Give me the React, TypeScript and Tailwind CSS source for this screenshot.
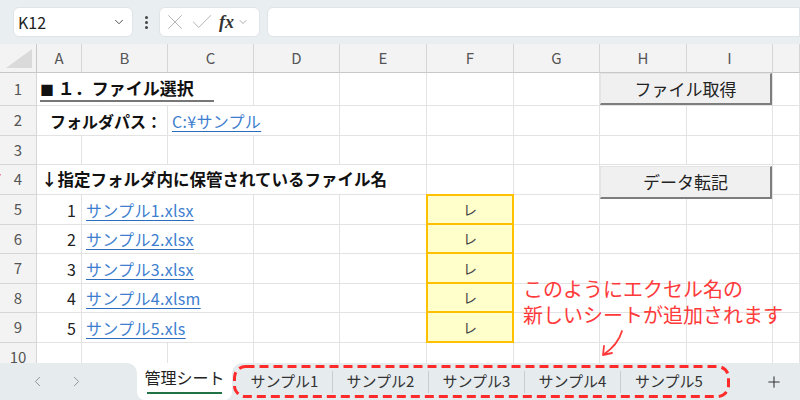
import { ChevronDown, ChevronLeft, ChevronRight, Plus, X, Check } from "lucide-react";

const GRID =
  "grid grid-cols-[37px_45px_86px_86px_86px_87px_87px_86px_87px_86px_1fr]";
const CELL = "border-r border-b border-[#e3e3e3]";
const HEAD =
  "flex items-center justify-center bg-[#f3f3f3] border-r border-b border-[#d6d6d6] text-[15px] text-[#555]";
const LINK =
  "text-[16px] tracking-[0.3px] text-[#3d7ecf] underline decoration-[#2c6cbd] underline-offset-[3px]";

const letters = ["A", "B", "C", "D", "E", "F", "G", "H", "I", ""];

function RowHead({ n }: { n: number }) {
  return <div className={HEAD}>{n}</div>;
}

function SheetButton({ label }: { label: string }) {
  return (
    <div className="flex h-full w-full items-center justify-center border-t border-l border-[#e4e4e4] border-r-2 border-b-2 border-r-[#7d7d7d] border-b-[#7d7d7d] bg-[#f0f0f0] text-[17px] text-[#222]">
      {label}
    </div>
  );
}

function FileRow({ n, name, first }: { n: number; name: string; first?: boolean }) {
  return (
    <div className={`${GRID} ${n === 5 ? "h-[30px]" : n % 2 === 0 ? "h-[29px]" : "h-[30px]"}`}>
      <RowHead n={n + 4} />
      <div className={`${CELL} flex items-center justify-end pr-[5px] text-[16px] text-[#222]`}>{n}</div>
      <div className={`${CELL} col-span-2 flex items-center pl-[4px] whitespace-nowrap`}>
        <span className={LINK}>{name}</span>
      </div>
      <div className={CELL} />
      <div className={CELL} />
      <div
        className={`z-10 -ml-px flex items-center justify-center border-x-2 border-b-2 border-[#ffc000] bg-[#ffffcc] text-[14px] text-[#444] ${
          first ? "-mt-px border-t-2" : ""
        }`}
      >
        レ
      </div>
      <div className={CELL} />
      <div className={CELL} />
      <div className={CELL} />
      <div className={CELL} />
    </div>
  );
}

const files = ["サンプル1.xlsx", "サンプル2.xlsx", "サンプル3.xlsx", "サンプル4.xlsm", "サンプル5.xls"];
const sheets = ["サンプル1", "サンプル2", "サンプル3", "サンプル4", "サンプル5"];

export default function App() {
  return (
    <div className="relative h-[400px] w-[800px] overflow-hidden bg-white font-['Noto_Sans_CJK_JP',sans-serif]">
      {/* formula bar */}
      <div className="flex h-[44px] items-center bg-[#e9eef1] pl-[13px]">
        <div className="flex h-[30px] w-[120px] items-center justify-between rounded-[6px] border border-[#dfe4e8] bg-white pl-[4px] pr-[6px]">
          <span className="text-[16px] text-[#222]">K12</span>
          <ChevronDown size={14} strokeWidth={1.6} className="text-[#444]" />
        </div>
        <div className="flex w-[26px] flex-col items-center gap-[2px]">
          <span className="h-[3px] w-[3px] rounded-full bg-[#444]" />
          <span className="h-[3px] w-[3px] rounded-full bg-[#444]" />
          <span className="h-[3px] w-[3px] rounded-full bg-[#444]" />
        </div>
        <div className="flex h-[30px] w-[101px] items-center rounded-[6px] border border-[#dfe4e8] bg-white pl-[2px]">
          <X size={26} strokeWidth={0.9} className="text-[#b4b4b4]" />
          <Check size={26} strokeWidth={0.9} className="ml-[1px] text-[#b4b4b4]" />
          <span className="ml-[4px] font-['Liberation_Serif',serif] text-[18px] font-bold italic text-[#333]">fx</span>
          <ChevronDown size={12} strokeWidth={1.4} className="ml-[3px] text-[#888]" />
        </div>
        <div className="ml-[7px] h-[30px] flex-1 rounded-l-[6px] border border-[#dfe4e8] bg-white" />
      </div>

      {/* grid */}
      <div className="h-[319px] overflow-hidden">
        <div className={`${GRID} h-[29px]`}>
          <div className="flex items-end justify-end border-r border-b border-[#c8c8c8] bg-[#f3f3f3] pb-[4px] pr-[4px]">
            <svg width="26" height="19" viewBox="0 0 26 19">
              <polygon points="26,0 26,19 0,19" fill="#dadada" />
            </svg>
          </div>
          {letters.map((l, i) => (
            <div key={i} className={`${HEAD} border-b-[#c8c8c8]`}>
              {l}
            </div>
          ))}
        </div>

        {/* row 1 */}
        <div className={`${GRID} h-[33px]`}>
          <RowHead n={1} />
          <div className={`${CELL} col-span-3 flex items-center whitespace-nowrap pl-[3px]`}>
            <span className="border-b-2 border-[#777] pr-[20px] text-[17px] font-bold leading-[22px] text-[#111]">
              <span className="text-[14px]">■</span> １．ファイル選択
            </span>
          </div>
          <div className={CELL} />
          <div className={CELL} />
          <div className={CELL} />
          <div className={CELL} />
          <div className={`${CELL} col-span-2`}>
            <SheetButton label="ファイル取得" />
          </div>
          <div className={CELL} />
        </div>

        {/* row 2 */}
        <div className={`${GRID} h-[30px]`}>
          <RowHead n={2} />
          <div className={`${CELL} col-span-2 flex items-center whitespace-nowrap pl-[13px] text-[16px] font-bold text-[#111]`}>
            フォルダパス：
          </div>
          <div className={`${CELL} col-span-2 flex items-center whitespace-nowrap pl-[4px]`}>
            <span className={LINK}>C:¥サンプル</span>
          </div>
          <div className={CELL} />
          <div className={CELL} />
          <div className={CELL} />
          <div className={CELL} />
          <div className={CELL} />
          <div className={CELL} />
        </div>

        {/* row 3 */}
        <div className={`${GRID} h-[29px]`}>
          <RowHead n={3} />
          {letters.map((_, i) => (
            <div key={i} className={CELL} />
          ))}
        </div>

        {/* row 4 */}
        <div className={`${GRID} h-[30px]`}>
          <RowHead n={4} />
          <div className={`${CELL} col-span-5 flex items-center whitespace-nowrap pl-[4px] text-[16.5px] font-bold text-[#111]`}>
            ↓指定フォルダ内に保管されているファイル名
          </div>
          <div className={CELL} />
          <div className={CELL} />
          <div className={`${CELL} relative col-span-2`}>
            <div className="absolute left-0 right-0 top-px z-20 h-[33px]">
              <SheetButton label="データ転記" />
            </div>
          </div>
          <div className={CELL} />
        </div>

        {files.map((f, i) => (
          <FileRow key={f} n={i + 1} name={f} first={i === 0} />
        ))}

        {/* row 10 */}
        <div className={`${GRID} h-[30px]`}>
          <RowHead n={10} />
          {letters.map((_, i) => (
            <div key={i} className={CELL} />
          ))}
        </div>
      </div>

      {/* sheet tabs */}
      <div className="relative flex h-[37px] bg-white">
        <div className="flex w-[137px] items-center rounded-tr-[10px] bg-[#e6ebee] pl-[29px]">
          <ChevronLeft size={17} strokeWidth={1.4} className="text-[#8c9296]" />
          <ChevronRight size={17} strokeWidth={1.4} className="ml-[22px] text-[#8c9296]" />
        </div>
        <div className="w-[95px] bg-[#e6ebee]">
          <div className="flex h-full flex-col items-center rounded-b-[8px] bg-white pt-[2px]">
            <span className="text-[16px] leading-[24px] text-[#222]">管理シート</span>
            <span className="mt-[3px] h-[2px] w-[75px] bg-[#217346]" />
          </div>
        </div>
        <div className="flex flex-1 items-center rounded-tl-[10px] bg-[#e6ebee] pl-[5px]">
          {sheets.map((s, i) => (
            <div
              key={s}
              className={`flex h-[22px] w-[96px] items-center justify-center text-[15px] text-[#333] ${
                i < 4 ? "border-r border-[#c9ced2]" : ""
              }`}
            >
              {s}
            </div>
          ))}
          <Plus size={18} strokeWidth={1.4} className="ml-[48px] text-[#333]" />
        </div>
        <svg className="absolute left-[233px] top-[2px]" width="497" height="33" viewBox="0 0 497 33">
          <rect
            x="1.5"
            y="1.5"
            width="494"
            height="30"
            rx="11"
            fill="none"
            stroke="#ff2b2b"
            strokeWidth="3"
            strokeDasharray="9 5"
          />
        </svg>
      </div>

      {/* annotation */}
      <div className="absolute left-[523px] top-[276px] text-[20px] leading-[26px] text-[#ff3a3a]">
        <p>このようにエクセル名の</p>
        <p>新しいシートが追加されます</p>
      </div>
      <svg className="absolute left-[598px] top-[327px]" width="30" height="32" viewBox="0 0 30 32">
        <path d="M24 4 Q20 18 5 28 M5 28 L6 19 M5 28 L14 26" fill="none" stroke="#ff3a3a" strokeWidth="1.8" strokeLinecap="round" />
      </svg>
      <span className="absolute left-[-17px] top-[166px] text-[20px] text-[#ff3a3a]">て</span>
    </div>
  );
}
